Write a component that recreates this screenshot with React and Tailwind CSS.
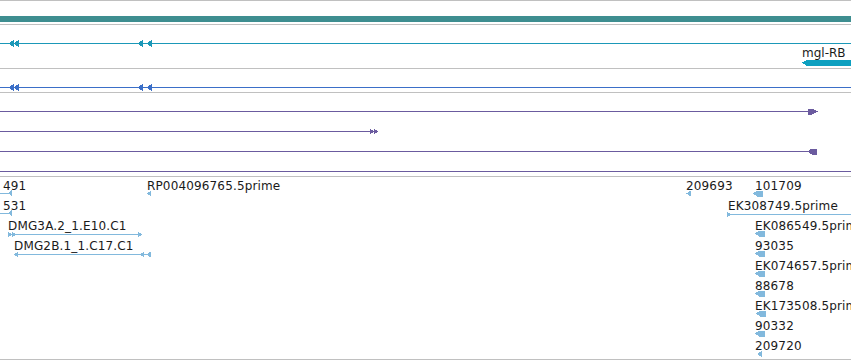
import React from "react";

// track colours
const TEAL = "#1b98b8";
const BLUE = "#3b6fc8";
const PURPLE = "#6b5b9f";
const LIGHT = "#82b9dd";

const leftTip = (x, cy, w = 5, h = 3.5) =>
  `${x},${cy} ${x + w},${cy - h} ${x + w},${cy + h}`;
const rightTip = (x, cy, w = 5, h = 3.5) =>
  `${x},${cy - h} ${x + w},${cy} ${x},${cy + h}`;

const Line = ({ x1, x2, y, color }) => (
  <line x1={x1} x2={x2} y1={y + 0.5} y2={y + 0.5} stroke={color} strokeWidth="1" />
);

const GeneTrack = ({ color }) => (
  <svg width="851" height="23" className="block" shapeRendering="crispEdges">
    <Line x1={0} x2={851} y={18} color={color} />
    <polygon points={leftTip(8, 18.5, 6, 4)} fill={color} />
    <polygon points={leftTip(13, 18.5, 6, 4)} fill={color} />
    <polygon points={leftTip(137, 18.5, 6, 4)} fill={color} />
    <polygon points={leftTip(146, 18.5, 6, 4)} fill={color} />
  </svg>
);

const Label = ({ x, row, children }) => (
  <div
    className="absolute whitespace-nowrap text-[12px] leading-[12px] tracking-[0.15px] text-[#1a1a1a]"
    style={{ left: x, top: 3 + row * 20 }}
  >
    {children}
  </div>
);

const labels = [
  [3, 0, "491"],
  [147, 0, "RP004096765.5prime"],
  [686, 0, "209693"],
  [755, 0, "101709"],
  [3, 1, "531"],
  [728, 1, "EK308749.5prime"],
  [8, 2, "DMG3A.2_1.E10.C1"],
  [755, 2, "EK086549.5prime"],
  [14, 3, "DMG2B.1_1.C17.C1"],
  [755, 3, "93035"],
  [755, 4, "EK074657.5prime"],
  [755, 5, "88678"],
  [755, 6, "EK173508.5prime"],
  [755, 7, "90332"],
  [755, 8, "209720"],
];

const thick = (x, cy) =>
  `${x},${cy} ${x + 4},${cy - 3} ${x + 10},${cy - 3} ${x + 10},${cy + 3} ${x + 4},${cy + 3}`;

export default function App() {
  return (
    <div className="w-[851px] h-[360px] overflow-hidden bg-white font-['DejaVu_Sans',sans-serif]">
      <div className="flex flex-col border-t border-[#c0c0c0]">
        {/* overview bar */}
        <div className="h-[23px] border-b border-[#c0c0c0] box-content">
          <div className="mt-[15px] h-[6px] bg-[#3e8e90]" />
        </div>

        {/* gene models */}
        <div className="relative h-[43px] border-b border-[#c0c0c0] box-content">
          <GeneTrack color={TEAL} />
          <div className="absolute left-[802px] top-[22px] text-[12px] leading-[12px] text-[#1a1a1a]">
            mgl-RB
          </div>
          <svg width="851" height="8" className="absolute left-0 top-[34px]" shapeRendering="crispEdges">
            <polygon points="802,3.5 807,1 851,1 851,7 807,7" fill="#0ea0c0" />
          </svg>
        </div>

        <div className="h-[23px] border-b border-[#c0c0c0] box-content">
          <GeneTrack color={BLUE} />
        </div>

        {/* transcripts */}
        <div className="h-[83px] border-b border-[#c0c0c0] box-content">
          <svg width="851" height="83" className="block" shapeRendering="crispEdges">
            <Line x1={0} x2={810} y={18} color={PURPLE} />
            <polygon points="808,15.5 812,15.5 818,18.5 812,21.5 808,21.5" fill={PURPLE} />
            <Line x1={0} x2={372} y={38} color={PURPLE} />
            <polygon points={rightTip(370, 38.5, 4, 3)} fill={PURPLE} />
            <polygon points={rightTip(374, 38.5, 4, 3)} fill={PURPLE} />
            <Line x1={0} x2={812} y={58} color={PURPLE} />
            <polygon points="807,58.5 812,55.5 817,55.5 817,61.5 812,61.5" fill={PURPLE} />
            <Line x1={0} x2={851} y={78} color={PURPLE} />
          </svg>
        </div>

        {/* ESTs / primers */}
        <div className="relative h-[182px] border-b border-[#c0c0c0] box-content">
          <svg width="851" height="182" className="absolute left-0 top-0" shapeRendering="crispEdges">
            <Line x1={0} x2={12} y={16} color={LIGHT} />
            <polygon points={leftTip(8, 16, 4, 3)} fill={LIGHT} />
            <polygon points={leftTip(147, 16.5, 4, 3)} fill={LIGHT} />
            <polygon points={leftTip(686, 16.5, 5, 3)} fill={LIGHT} />
            <polygon points={thick(753, 16.5)} fill={LIGHT} />

            <Line x1={0} x2={12} y={36} color={LIGHT} />
            <polygon points={leftTip(8, 36, 4, 3)} fill={LIGHT} />
            <Line x1={727} x2={851} y={37} color={LIGHT} />
            <polygon points={rightTip(727, 37.5, 4, 3)} fill={LIGHT} />

            <Line x1={8} x2={142} y={57} color={LIGHT} />
            <polygon points={rightTip(8, 57.5, 4, 3)} fill={LIGHT} />
            <polygon points={rightTip(12, 57.5, 4, 3)} fill={LIGHT} />
            <polygon points={rightTip(138, 57.5, 4, 3)} fill={LIGHT} />
            <polygon points={thick(755, 56.5)} fill={LIGHT} />

            <Line x1={14} x2={151} y={77} color={LIGHT} />
            <polygon points={leftTip(14, 77.5, 4, 3)} fill={LIGHT} />
            <polygon points={leftTip(140, 77.5, 4, 3)} fill={LIGHT} />
            <polygon points={leftTip(146, 77.5, 5, 3)} fill={LIGHT} />
            <polygon points={thick(755, 76.5)} fill={LIGHT} />

            <polygon points={thick(755, 96.5)} fill={LIGHT} />
            <polygon points={thick(755, 116.5)} fill={LIGHT} />
            <polygon points={thick(756, 136.5)} fill={LIGHT} />
            <polygon points={thick(755, 156.5)} fill={LIGHT} />
            <polygon points={leftTip(757, 177, 5, 3)} fill={LIGHT} />
          </svg>
          {labels.map(([x, row, text]) => (
            <Label key={text} x={x} row={row}>
              {text}
            </Label>
          ))}
        </div>
      </div>
    </div>
  );
}
